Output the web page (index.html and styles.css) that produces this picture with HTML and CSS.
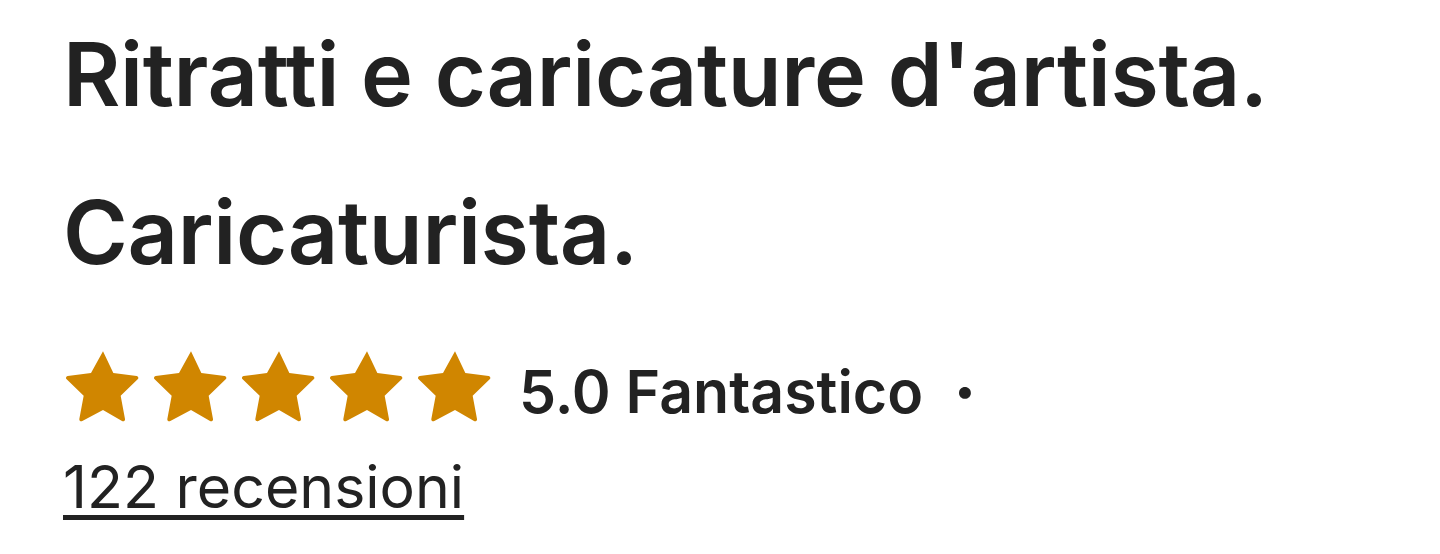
FILE: index.html
```html
<!DOCTYPE html>
<html lang="it">
<head>
  <meta charset="UTF-8">
  <title>Caricaturista</title>
  <link rel="stylesheet" href="styles.css">
</head>
<body>
  <div class="profile">
    <h1 class="title">Ritratti e caricature d'artista. Caricaturista.</h1>
    <div class="rating">
      <div class="stars">
        <svg class="star" viewBox="0 0 24 24"><path d="M12 1.6l3.1 6.5 7 .9c.5.1.7.7.3 1l-5.1 4.9 1.3 7c.1.5-.5.9-.9.6L12 19.2l-6.2 3.3c-.4.3-1-.1-.9-.6l1.3-7-5.1-4.9c-.4-.3-.2-.9.3-1l7-.9z"/></svg>
        <svg class="star" viewBox="0 0 24 24"><path d="M12 1.6l3.1 6.5 7 .9c.5.1.7.7.3 1l-5.1 4.9 1.3 7c.1.5-.5.9-.9.6L12 19.2l-6.2 3.3c-.4.3-1-.1-.9-.6l1.3-7-5.1-4.9c-.4-.3-.2-.9.3-1l7-.9z"/></svg>
        <svg class="star" viewBox="0 0 24 24"><path d="M12 1.6l3.1 6.5 7 .9c.5.1.7.7.3 1l-5.1 4.9 1.3 7c.1.5-.5.9-.9.6L12 19.2l-6.2 3.3c-.4.3-1-.1-.9-.6l1.3-7-5.1-4.9c-.4-.3-.2-.9.3-1l7-.9z"/></svg>
        <svg class="star" viewBox="0 0 24 24"><path d="M12 1.6l3.1 6.5 7 .9c.5.1.7.7.3 1l-5.1 4.9 1.3 7c.1.5-.5.9-.9.6L12 19.2l-6.2 3.3c-.4.3-1-.1-.9-.6l1.3-7-5.1-4.9c-.4-.3-.2-.9.3-1l7-.9z"/></svg>
        <svg class="star" viewBox="0 0 24 24"><path d="M12 1.6l3.1 6.5 7 .9c.5.1.7.7.3 1l-5.1 4.9 1.3 7c.1.5-.5.9-.9.6L12 19.2l-6.2 3.3c-.4.3-1-.1-.9-.6l1.3-7-5.1-4.9c-.4-.3-.2-.9.3-1l7-.9z"/></svg>
      </div>
      <span class="score">5.0 Fantastico</span>
      <span class="dot">·</span>
    </div>
    <a class="reviews" href="#">122 recensioni</a>
  </div>
</body>
</html>
```

FILE: styles.css
```css
body {
  margin: 0;
  background-color: #ffffff;
  font-family: Inter, "Open Sans", sans-serif;
  color: #222222;
}
.profile {
  padding: 0 100px 0 63px;
}
.title {
  margin: -5px 0 0;
  font-size: 88px;
  font-weight: 600;
  line-height: 158px;
  letter-spacing: -0.3px;
  font-variant-ligatures: none;
}
.rating {
  display: flex;
  align-items: center;
  margin-top: 26px;
}
.stars {
  display: flex;
  gap: 8px;
}
.star {
  width: 80px;
  height: 80px;
  fill: #d08600;
}
.score {
  margin: 12px 0 0 24px;
  font-size: 59px;
  font-weight: 600;
}
.dot {
  margin: 12px 0 0 30px;
  font-size: 70px;
  font-weight: 700;
}
.reviews {
  display: inline-block;
  margin-top: 17px;
  font-size: 59px;
  color: #222222;
  text-decoration-thickness: 5px;
  text-underline-offset: 7px;
}
```
